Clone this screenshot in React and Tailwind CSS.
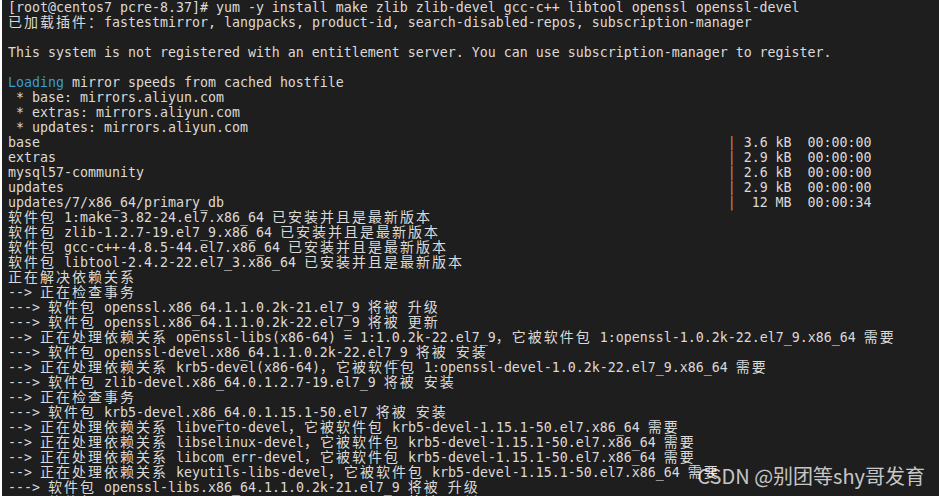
import React from "react";

const CJK = /([\u2E80-\u9FFF\u3000-\u303F\uFF00-\uFFEF]+)/;

function Txt({ s }) {
  return s.split(CJK).map((p, i) =>
    i % 2 === 1 ? (
      <span
        key={i}
        className="font-['Noto_Sans_CJK_SC',sans-serif] text-[14px] tracking-[2px] leading-[8px]"
      >
        {p}
      </span>
    ) : (
      <React.Fragment key={i}>{p}</React.Fragment>
    )
  );
}

const plain = (s) => ({ kind: "plain", s });
const prog = (name, rest) => ({ kind: "prog", name, rest });

const lines = [
  plain("[root@centos7 pcre-8.37]# yum -y install make zlib zlib-devel gcc-c++ libtool openssl openssl-devel"),
  plain("已加载插件：fastestmirror, langpacks, product-id, search-disabled-repos, subscription-manager"),
  plain(""),
  plain("This system is not registered with an entitlement server. You can use subscription-manager to register."),
  plain(""),
  { kind: "loading" },
  plain(" * base: mirrors.aliyun.com"),
  plain(" * extras: mirrors.aliyun.com"),
  plain(" * updates: mirrors.aliyun.com"),
  prog("base", " 3.6 kB  00:00:00"),
  prog("extras", " 2.9 kB  00:00:00"),
  prog("mysql57-community", " 2.6 kB  00:00:00"),
  prog("updates", " 2.9 kB  00:00:00"),
  prog("updates/7/x86_64/primary_db", "  12 MB  00:00:34"),
  plain("软件包 1:make-3.82-24.el7.x86_64 已安装并且是最新版本"),
  plain("软件包 zlib-1.2.7-19.el7_9.x86_64 已安装并且是最新版本"),
  plain("软件包 gcc-c++-4.8.5-44.el7.x86_64 已安装并且是最新版本"),
  plain("软件包 libtool-2.4.2-22.el7_3.x86_64 已安装并且是最新版本"),
  plain("正在解决依赖关系"),
  plain("--> 正在检查事务"),
  plain("---> 软件包 openssl.x86_64.1.1.0.2k-21.el7_9 将被 升级"),
  plain("---> 软件包 openssl.x86_64.1.1.0.2k-22.el7_9 将被 更新"),
  plain("--> 正在处理依赖关系 openssl-libs(x86-64) = 1:1.0.2k-22.el7_9，它被软件包 1:openssl-1.0.2k-22.el7_9.x86_64 需要"),
  plain("---> 软件包 openssl-devel.x86_64.1.1.0.2k-22.el7_9 将被 安装"),
  plain("--> 正在处理依赖关系 krb5-devel(x86-64)，它被软件包 1:openssl-devel-1.0.2k-22.el7_9.x86_64 需要"),
  plain("---> 软件包 zlib-devel.x86_64.0.1.2.7-19.el7_9 将被 安装"),
  plain("--> 正在检查事务"),
  plain("---> 软件包 krb5-devel.x86_64.0.1.15.1-50.el7 将被 安装"),
  plain("--> 正在处理依赖关系 libverto-devel，它被软件包 krb5-devel-1.15.1-50.el7.x86_64 需要"),
  plain("--> 正在处理依赖关系 libselinux-devel，它被软件包 krb5-devel-1.15.1-50.el7.x86_64 需要"),
  plain("--> 正在处理依赖关系 libcom_err-devel，它被软件包 krb5-devel-1.15.1-50.el7.x86_64 需要"),
  plain("--> 正在处理依赖关系 keyutils-libs-devel，它被软件包 krb5-devel-1.15.1-50.el7.x86_64 需要"),
  plain("---> 软件包 openssl-libs.x86_64.1.1.0.2k-21.el7_9 将被 升级"),
  plain("---> 软件包 openssl-libs.x86_64.1.1.0.2k-22.el7_9 将被 更新"),
];

function Line({ l }) {
  let content = null;
  if (l.kind === "plain") content = <Txt s={l.s} />;
  else if (l.kind === "loading")
    content = (
      <>
        <span className="text-[#3a9bd5]">Loading</span> mirror speeds from cached hostfile
      </>
    );
  else
    content = (
      <>
        {l.name.padEnd(90, " ")}
        <span className="text-[#c68a4a]">|</span>
        {l.rest}
      </>
    );
  return <div className="h-[15px] leading-[15px] shrink-0">{content}</div>;
}

export default function App() {
  return (
    <div className="w-[939px] h-[498px] bg-white flex">
      <div className="relative ml-[2px] w-[937px] h-[496px] bg-[#1e1e1e] overflow-hidden pl-[6px] flex flex-col whitespace-pre font-['DejaVu_Sans_Mono','Noto_Sans_CJK_SC',monospace] text-[13.29px] text-[#dadada]">
        {lines.map((l, i) => (
          <Line key={i} l={l} />
        ))}
        <div className="absolute right-[14px] bottom-[6px] font-['Noto_Sans_CJK_SC',sans-serif] text-[20px] leading-[28px] text-white/75 whitespace-nowrap">
          CSDN @别团等shy哥发育
        </div>
      </div>
    </div>
  );
}
